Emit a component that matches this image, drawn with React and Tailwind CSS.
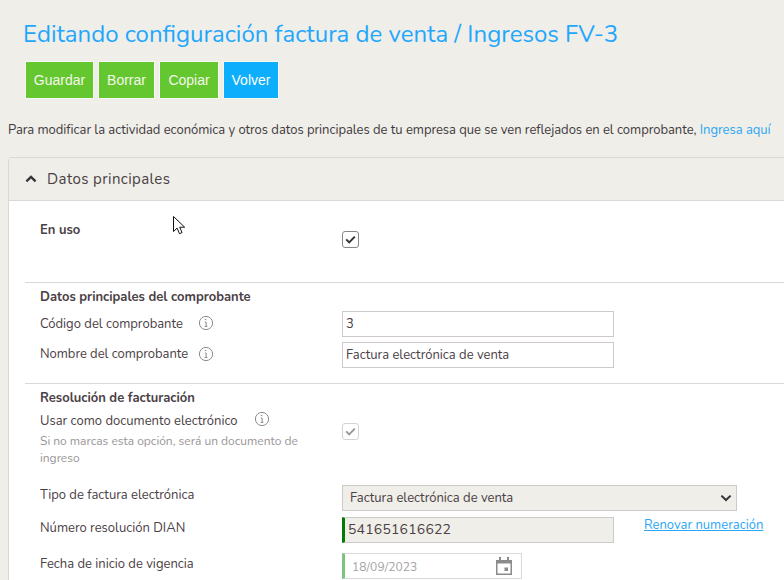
function Info({ className = "" }) {
  return (
    <svg width="16" height="16" viewBox="0 0 16 16" fill="none" className={className}>
      <circle cx="8" cy="8" r="6.6" stroke="#8f8a8a" strokeWidth="1" />
      <path d="M6.8 4.6h1.6M6.9 7h1.2v4.4M6.6 11.4h2.8" stroke="#8f8a8a" strokeWidth="1" />
    </svg>
  );
}

function Check({ disabled }) {
  return (
    <div className={`w-[17px] h-[17px] rounded-[3px] border flex items-center justify-center bg-white ${disabled ? "border-[#d8d3d3]" : "border-[#8a8585]"}`}>
      <svg width="11" height="9" viewBox="0 0 11 9" fill="none">
        <path d="M1.2 4.4 4.2 7.4 9.8 1.6" stroke={disabled ? "#9a9a9a" : "#333"} strokeWidth="2" />
      </svg>
    </div>
  );
}

export default function App() {
  return (
    <div className="relative w-[784px] h-[580px] overflow-hidden bg-[#efeee8] font-['Nunito','Lato','Open_Sans',sans-serif] text-[#4a4045]">
      <h1 className="pl-[23px] pt-[18px] h-[61px] text-[24px] leading-[32px] text-[#1ea7fd] font-normal whitespace-nowrap">
        Editando configuración factura de venta / Ingresos FV-3
      </h1>

      <div className="flex gap-[4px] pl-[25px] h-[38px] font-['Liberation_Sans',sans-serif] text-[14px] text-[#f2f7ea]">
        <button className="w-[69px] border border-[#f7f7f4] bg-[#65c72f]">Guardar</button>
        <button className="w-[57px] border border-[#f7f7f4] bg-[#65c72f]">Borrar</button>
        <button className="w-[60px] border border-[#f7f7f4] bg-[#65c72f]">Copiar</button>
        <button className="w-[56px] border border-[#f7f7f4] bg-[#0daefb] text-white">Volver</button>
      </div>

      <p className="pl-[8px] mt-[22px] h-[19px] text-[13px] leading-[19px] text-[#3f3a40] whitespace-nowrap tracking-[-0.03px]">
        Para modificar la actividad económica y otros datos principales de tu empresa que se ven reflejados en el comprobante, <span className="text-[#2ba6f5]">Ingresa aquí</span>
      </p>

      <div className="ml-[8px] mt-[17px] w-[800px] border-l border-t border-[#dcd8d8] rounded-tl-[4px] bg-white">
        <div className="h-[43px] bg-[#efeee8] border-b border-[#dcd8d8] flex items-center pl-[16px]">
          <svg width="12" height="8" viewBox="0 0 12 8" fill="none">
            <path d="M1.4 6.4 6 2l4.6 4.4" stroke="#3b3338" strokeWidth="2.4" />
          </svg>
          <span className="ml-[10px] text-[15px] tracking-[0.4px] text-[#4a4045]">Datos principales</span>
        </div>

        <div className="text-[13px] leading-[18px] h-[400px]">
          <div className="pl-[31px] pt-[20px] flex h-[81px]">
            <span className="w-[302px] font-bold">En uso</span>
            <div className="pt-[10px]"><Check /></div>
          </div>

          <div className="ml-[16px] border-t border-[#dcd8d8] h-[101px]">
            <div className="pl-[15px] pt-[5px] h-[28px] font-bold">Datos principales del comprobante</div>
            <div className="pl-[15px] flex h-[31px]">
              <div className="w-[302px] flex items-start pt-[4px]">
                <span>Código del comprobante</span>
                <Info className="ml-[15px]" />
              </div>
              <div className="w-[272px] h-[26px] border border-[#cfcaca] pl-[3px] leading-[24px]">3</div>
            </div>
            <div className="pl-[15px] flex h-[31px]">
              <div className="w-[302px] flex items-start pt-[3px]">
                <span className="tracking-[-0.04px]">Nombre del comprobante</span>
                <Info className="ml-[10px] mt-[1px]" />
              </div>
              <div className="w-[272px] h-[26px] border border-[#cfcaca] pl-[3px] leading-[24px]">Factura electrónica de venta</div>
            </div>
          </div>

          <div className="ml-[16px] border-t border-[#dcd8d8]">
            <div className="pl-[15px] pt-[5px] h-[27px] font-bold">Resolución de facturación</div>
            <div className="pl-[15px] flex h-[74px]">
              <div className="w-[302px]">
                <div className="flex items-start pt-[1px]">
                  <span>Usar como documento electrónico</span>
                  <Info className="ml-[16px] -mt-[1px]" />
                </div>
                <p className="mt-[3px] w-[270px] text-[12px] leading-[17px] text-[#9a9597]">
                  Si no marcas esta opción, será un documento de ingreso
                </p>
              </div>
              <div className="pt-[12px]"><Check disabled /></div>
            </div>
            <div className="pl-[15px] flex h-[32px]">
              <div className="w-[302px] pt-[1px]">Tipo de factura electrónica</div>
              <div className="w-[395px] h-[26px] border border-[#cfcaca] bg-[#efeee8] flex items-center justify-between pl-[7px] pr-[4px]">
                <span>Factura electrónica de venta</span>
                <svg width="12" height="8" viewBox="0 0 12 8" fill="none">
                  <path d="M1.4 1.6 6 6l4.6-4.4" stroke="#3b3338" strokeWidth="2" />
                </svg>
              </div>
            </div>
            <div className="pl-[15px] flex h-[36px]">
              <div className="w-[302px] pt-[2px]">Número resolución DIAN</div>
              <div className="w-[272px] h-[26px] border border-[#cfcaca] border-l-[3px] border-l-[#067a06] bg-[#efeee8] pl-[3px] leading-[24px] text-[14px] tracking-[0.2px]">541651616622</div>
              <a className="ml-[30px] -mt-[1px] text-[#2ba6f5] underline">Renovar numeración</a>
            </div>
            <div className="pl-[15px] flex h-[28px]">
              <div className="w-[302px] pt-[2px]">Fecha de inicio de vigencia</div>
              <div className="w-[180px] h-[26px] border border-[#dcd8d8] border-l-[3px] border-l-[#7cc47f] flex items-center justify-between pl-[7px] pr-[9px] text-[#a5a2a3] text-[12px] tracking-[0.1px]">
                <span className="pt-[2px]">18/09/2023</span>
                <svg width="16" height="18" viewBox="0 0 16 18" fill="none">
                  <path d="M0 3h16v15H0z" fill="#8b8b8b" />
                  <path d="M3 0h2v3H3zM11 0h2v3h-2z" fill="#8b8b8b" />
                  <path d="M1.5 6.5h13V16.5h-13z" fill="#fff" />
                  <path d="M8.5 10.5h3.5v3.5H8.5z" fill="#8b8b8b" />
                </svg>
              </div>
            </div>
          </div>
        </div>
      </div>

      <svg width="14" height="20" viewBox="0 0 14 20" className="absolute left-[173px] top-[216px]">
        <path d="M.5.5v15l3.6-3.4 2.4 5.6 2.6-1.1-2.4-5.4h5z" fill="#fff" stroke="#111" strokeWidth="1" />
      </svg>
    </div>
  );
}
